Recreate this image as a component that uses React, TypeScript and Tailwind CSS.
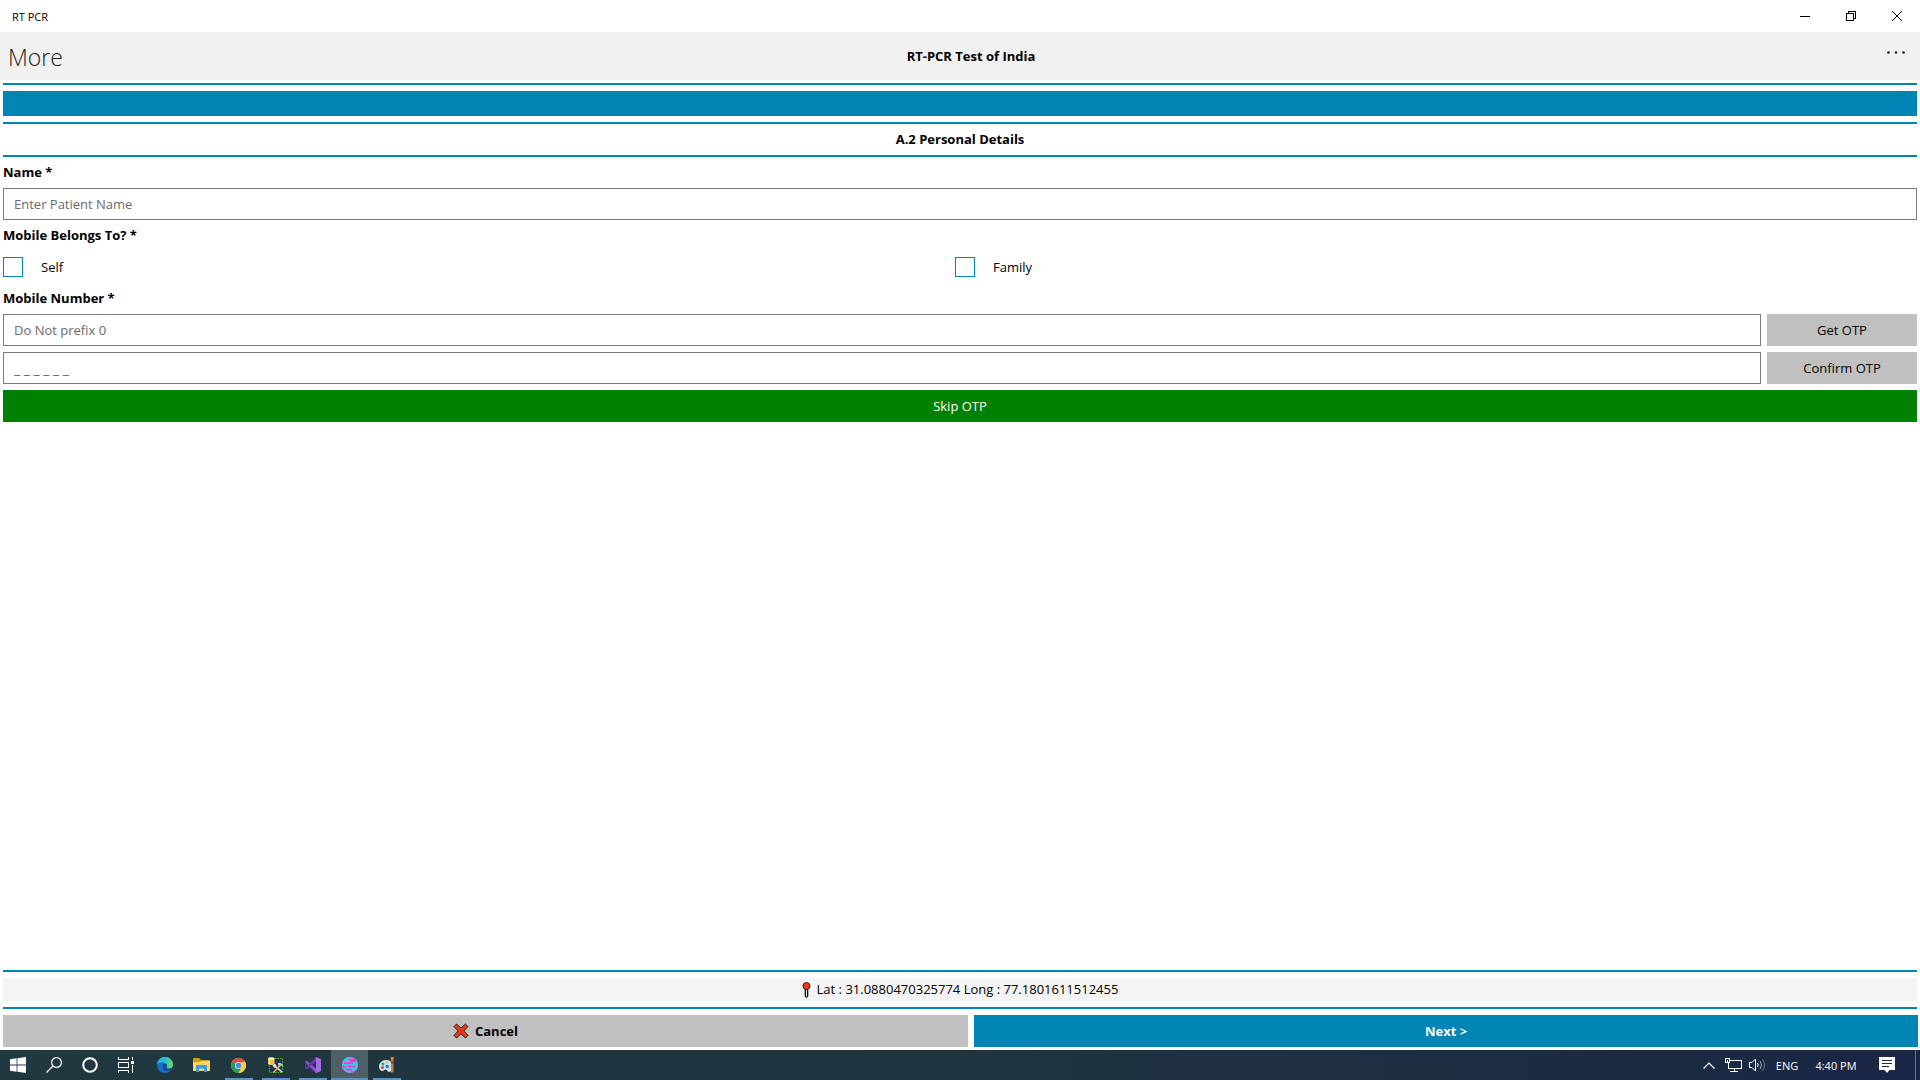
import { useState, type ReactNode } from "react";

const Rule = () => <div className="h-0.5 shrink-0 bg-[#0085b5]" />;

function Checkbox({ label }: { label: string }) {
  const [checked, setChecked] = useState(false);
  return (
    <label className="flex h-8 items-center gap-[18px]">
      <input
        type="checkbox"
        checked={checked}
        onChange={(e) => setChecked(e.target.checked)}
        className="size-5 appearance-none border border-[#0085b5] bg-white checked:bg-[#0085b5]"
      />
      {label}
    </label>
  );
}

const inputClass =
  "h-8 w-full min-w-0 flex-1 border border-[#7a7a7a] bg-white px-2.5 text-black outline-none placeholder:text-[#6b6b6b]";

function TitleBar() {
  return (
    <div className="flex h-8 items-center justify-between pl-3 text-[11px]">
      <span>RT PCR</span>
      <div className="flex h-full">
        <button aria-label="Minimize" className="flex w-[46px] items-center justify-center">
          <svg width="10" height="10" shapeRendering="crispEdges">
            <path d="M0 5.5h10" stroke="#000" />
          </svg>
        </button>
        <button aria-label="Restore" className="flex w-[46px] items-center justify-center">
          <svg width="10" height="10" fill="none" stroke="#000" shapeRendering="crispEdges">
            <path d="M.5 2.5h7v7h-7zM2.5 2.5v-2h7v7h-2" />
          </svg>
        </button>
        <button aria-label="Close" className="flex w-[46px] items-center justify-center">
          <svg width="10" height="10" stroke="#000">
            <path d="M0 0l10 10M10 0L0 10" />
          </svg>
        </button>
      </div>
    </div>
  );
}

function Header() {
  return (
    <header className="flex h-12 items-center bg-[#f1f1f1]">
      <h1 className="w-[70px] pt-0.5 pl-2 text-[23px] font-light text-[#222]">More</h1>
      <h2 className="flex-1 text-center font-bold">RT-PCR Test of India</h2>
      <button aria-label="More options" className="flex h-full w-12 justify-center pt-[19px]">
        <svg width="18" height="3" fill="#222">
          <circle cx="1.5" cy="1.5" r="1.3" />
          <circle cx="9" cy="1.5" r="1.3" />
          <circle cx="16.5" cy="1.5" r="1.3" />
        </svg>
      </button>
    </header>
  );
}

function Pin() {
  return (
    <svg width="9" height="16" viewBox="0 0 9 16">
      <path d="M2.7 7h3.6v7.4L4.5 16l-1.8-1.6z" fill="#111" />
      <path d="M4 8h1v6.5H4z" fill="#ddd" />
      <circle cx="4.5" cy="4" r="3.5" fill="#f03a17" stroke="#222" />
    </svg>
  );
}

function CrossMark() {
  return (
    <svg width="16" height="16" viewBox="0 0 16 16">
      <path
        d="M3.6 1 8 5.2 12.4 1 15 3.6 10.8 8l4.2 4.4-2.6 2.6L8 10.8 3.6 15 1 12.4 5.2 8 1 3.6z"
        fill="#f03a17"
        stroke="#222"
        strokeLinejoin="round"
      />
    </svg>
  );
}

const icons = {
  start: (
    <svg width="16" height="16" viewBox="0 0 16 16" fill="#fff">
      <path d="M0 2.2 6.6 1.3v6.3H0zM7.4 1.2 16 0v7.6H7.4zM0 8.4h6.6v6.3L0 13.8zM7.4 8.4H16V16l-8.6-1.2z" />
    </svg>
  ),
  search: (
    <svg width="16" height="16" viewBox="0 0 16 16" fill="none" stroke="#fff" strokeWidth="1.2">
      <circle cx="10.5" cy="5.5" r="4.9" />
      <path d="M7 9 .5 15.5" />
    </svg>
  ),
  cortana: (
    <svg width="16" height="16" viewBox="0 0 16 16" fill="none" stroke="#fff" strokeWidth="2">
      <circle cx="8" cy="8" r="6.8" />
    </svg>
  ),
  taskView: (
    <svg width="16" height="16" viewBox="0 0 16 16" fill="none" stroke="#fff" shapeRendering="crispEdges">
      <path d="M.5 0v2.5h10V0M.5 5.5h10v5H.5zM.5 16v-2.5h10V16M14.5 0v3M14.5 8v8" />
      <path d="M13 4h3v3h-3z" fill="#fff" stroke="none" />
    </svg>
  ),
  edge: (
    <svg width="16" height="16" viewBox="0 0 16 16">
      <defs>
        <linearGradient id="edgeTop" x1="0" x2="1" y1=".3" y2=".5">
          <stop offset="0" stopColor="#2aa5e4" />
          <stop offset=".6" stopColor="#35c1c4" />
          <stop offset="1" stopColor="#6bd95b" />
        </linearGradient>
      </defs>
      <circle cx="8" cy="8" r="8" fill="#1273cf" />
      <path d="M0 8a8 8 0 0 1 16-.5c0 3-2.4 4.2-4.5 4.2-1.8 0-2.700-.7-2-1.600C11 7.800 8.500 5.600 5.500 5.600 2.500 5.600.4 7 0 8z" fill="url(#edgeTop)" />
      <path d="M5.5 9.500C5.500 7.800 6.600 6.800 8 6.600c2 .2 2.300 2 1.500 3.500-.5 1 .5 1.600 2 1.600 1.600 0 2.700-.4 3.500-.8-1.300 2.600-3.500 3.600-5.500 3.100-2.300-.5-4-2.200-4-4.500z" fill="#1b4a94" />
      <path d="M9.2 10.500c-.4.9.7 1.500 2.300 1.500 1.700 0 2.900-.6 3.700-1.200l-.3.800c-1.700 1-5.400.9-6.700-.4z" fill="#203840" />
    </svg>
  ),
  explorer: (
    <svg width="17" height="14" viewBox="0 0 17 14">
      <path d="M0 1Q0 0 1 0h5l2 2h8q1 0 1 1v4H0z" fill="#d99a1c" />
      <path d="M0 4h7l1.5-1H17v10H0z" fill="#ffd465" />
      <path d="M3 14V8.500Q3 7 4.500 7h8Q14 7 14 8.500V14h-3v-3.500H6V14z" fill="#3a9be0" />
    </svg>
  ),
  chrome: (
    <svg width="15" height="15" viewBox="0 0 16 16">
      <circle cx="8" cy="8" r="8" fill="#ffcd40" />
      <path d="M8 8 1.100 4A8 8 0 0 1 14.900 4z" fill="#df4a3c" />
      <path d="M1.100 4A8 8 0 0 0 8 16l3.500-6L8 8z" fill="#219c58" />
      <path d="M14.900 4A8 8 0 0 1 8 16l4-7-1-5z" fill="#ffcd40" />
      <circle cx="8" cy="8" r="3.8" fill="#f3f3f3" />
      <circle cx="8" cy="8" r="3" fill="#4a8af4" />
    </svg>
  ),
  database: (
    <svg width="16" height="16" viewBox="0 0 16 16">
      <path d="M1.5 6v9.500h13V1.500H7" fill="none" stroke="#45b52b" strokeDasharray="1.5 1" />
      <path d="M0 1.500v5.500c0 1.400 6.500 1.400 6.500 0V1.500z" fill="#edc14a" />
      <ellipse cx="3.25" cy="1.5" rx="3.25" ry="1.3" fill="#fff1bd" />
      <path d="M1.300 3v4" stroke="#fff4c5" />
      <path d="m5.500 8 8.500 7" stroke="#c7cdd2" strokeWidth="1.7" />
      <path d="m12.500 8-7 7.500" stroke="#e8b35a" strokeWidth="1.5" />
      <path d="M9.500 6.500c2-1.500 5-.5 6 3l-2-1-2 1.500z" fill="#b7c4d0" />
      <path d="m4.500 8.500 2.500-2 1.500 2.500-2 2z" fill="#e3e8ec" />
    </svg>
  ),
  visualStudio: (
    <svg width="16" height="16" viewBox="0 0 16 16">
      <path d="M0 4.2 1.800 3.400 12 12.200V16l-1 0L0 5.500z" fill="#8b4fd0" />
      <path d="M0 11.800 11 0h1v3.800L1.800 12.600z" fill="#6f38ad" />
      <path d="M0 4.200 1.600 5.200v5.600L0 11.800z" fill="#6330a0" />
      <path d="m11 0 5 2v12l-5 2z" fill="#a66be6" />
    </svg>
  ),
  globe: (
    <svg width="16" height="16" viewBox="0 0 16 16">
      <defs>
        <clipPath id="globe">
          <circle cx="8" cy="8" r="8" />
        </clipPath>
      </defs>
      <g clipPath="url(#globe)" strokeWidth="1.5">
        <path d="M0 0h16v16H0z" fill="#b58af0" />
        <path d="M3 1h4M0 4h7M10 5h6M0 7.500h7M10 8h6M0 11h6M8 12h7M3 14.500h6" stroke="#16d8e8" strokeWidth="2" />
        <path d="M6 2.500h7M8 4h6M2 6h9M6 9.500h7M1 9.500h3M4 12.800h6M9 15h4" stroke="#fb2fd0" />
      </g>
    </svg>
  ),
  paint: (
    <svg width="16" height="16" viewBox="0 0 16 16">
      <path d="M7 3C3 3 0 6 0 9.500 0 12 1.500 14 3.500 14c1.500 0 1.500-1.500 3-1.500 2 0 2 2.500 3.500 2.500 2.500 0 4-3 4-6 0-3.500-3-6-7-6z" fill="#cde6f5" />
      <circle cx="4" cy="7" r="1.5" fill="#31a354" />
      <circle cx="7.5" cy="5.5" r="1.3" fill="#f4b72d" />
      <circle cx="3.5" cy="10.5" r="1.5" fill="#e24432" />
      <circle cx="8.2" cy="9.5" r="1.8" fill="#2382cc" />
      <path d="M11.500 0H15l-.8 5h-2zM12 6h2.500v9.500H12z" fill="#e07c28" />
      <path d="M11.800 4.500h2.800v2h-2.800z" fill="#6e5237" />
    </svg>
  ),
};

interface TaskbarItem {
  name: string;
  icon: ReactNode;
  running?: boolean;
  active?: boolean;
}

const systemButtons: TaskbarItem[] = [
  { name: "Start", icon: icons.start },
  { name: "Search", icon: icons.search },
  { name: "Cortana", icon: icons.cortana },
  { name: "Task View", icon: icons.taskView },
];

const apps: TaskbarItem[] = [
  { name: "Microsoft Edge", icon: icons.edge },
  { name: "File Explorer", icon: icons.explorer },
  { name: "Google Chrome", icon: icons.chrome, running: true },
  { name: "Database Tools", icon: icons.database, running: true },
  { name: "Visual Studio", icon: icons.visualStudio, running: true },
  { name: "RT PCR", icon: icons.globe, running: true, active: true },
  { name: "Paint", icon: icons.paint, running: true },
];

function Taskbar() {
  return (
    <footer className="flex h-[30px] items-stretch bg-linear-to-r from-[#203840] via-[#20343f] to-[#1a2645] text-[11px] text-white">
      {systemButtons.map((b) => (
        <button key={b.name} aria-label={b.name} className="flex w-9 items-center justify-center">
          {b.icon}
        </button>
      ))}
      <div className="ml-0.5 flex">
        {apps.map((a) => (
          <button key={a.name} aria-label={a.name} className={`flex w-[37px] flex-col items-center ${a.active ? "bg-[#4d6068]" : ""}`}>
            <span className="flex flex-1 items-center pt-0.5">{a.icon}</span>
            <span className={`h-0.5 ${a.active ? "w-full" : "w-7"} ${a.running ? "bg-[#5b93c5]" : ""}`} />
          </button>
        ))}
      </div>
      <div className="ml-auto flex items-center">
        <button aria-label="Show hidden icons" className="flex w-6 justify-center">
          <svg width="12" height="7" fill="none" stroke="#fff" strokeWidth="1.2">
            <path d="M.5 6.500 6 1l5.500 5.500" />
          </svg>
        </button>
        <button aria-label="Network" className="flex w-6 justify-center">
          <svg width="17" height="14" fill="none" stroke="#fff" shapeRendering="crispEdges">
            <path d="M4 2.500h12.500v8H3.500V5M9.500 11v2.500M5 13.500h8M.5.500h4v4h-4zM2.500 2v3" />
          </svg>
        </button>
        <button aria-label="Volume" className="flex w-6 justify-center">
          <svg width="17" height="14" viewBox="0 0 17 14" fill="none" stroke="#fff">
            <path d="M.5 4.500h2.500l3.500-3.500v12L3 9.500H.5z" />
            <path d="M8.500 5q1.500 2 0 4" />
            <path d="M11 3q3 4 0 8" opacity=".6" />
            <path d="M13.500 1.200q4 5.800 0 11.600" opacity=".35" />
          </svg>
        </button>
        <button className="w-9 text-center">ENG</button>
        <button className="w-[62px] text-center whitespace-nowrap">4:40 PM</button>
        <button aria-label="Notifications" className="flex w-10 justify-center">
          <svg width="16" height="16" viewBox="0 0 16 16">
            <path d="M0 0h16v13h-5.500L8 16l-2.500-3H0z" fill="#fff" />
            <path d="M3 3.500h10M3 6.500h10M3 9.500h7" stroke="#1b2945" />
          </svg>
        </button>
        <button aria-label="Show desktop" className="ml-2 h-[30px] w-[5px] border-l border-[#69748a]" />
      </div>
    </footer>
  );
}

function App() {
  return (
    <div className="flex min-h-screen flex-col bg-white font-['Open_Sans','Noto_Sans',sans-serif] text-[13px] leading-[19px] text-black">
      <TitleBar />
      <Header />
      <main className="flex flex-1 flex-col gap-1.5 p-[3px]">
        <Rule />
        <div className="h-[25px] bg-[#0085b5]" />
        <Rule />
        <h3 className="text-center font-bold">A.2 Personal Details</h3>
        <Rule />
        <label htmlFor="name" className="font-bold">Name *</label>
        <div className="flex">
          <input id="name" className={inputClass} placeholder="Enter Patient Name" />
        </div>
        <p id="belongs" className="font-bold">Mobile Belongs To? *</p>
        <div role="group" aria-labelledby="belongs" className="grid grid-cols-[946fr_962fr] gap-1.5">
          <Checkbox label="Self" />
          <Checkbox label="Family" />
        </div>
        <label htmlFor="mobile" className="font-bold">Mobile Number *</label>
        <div className="flex gap-1.5">
          <input id="mobile" type="tel" className={inputClass} placeholder="Do Not prefix 0" />
          <button className="w-[150px] bg-[#c0c0c0]">Get OTP</button>
        </div>
        <div className="flex gap-1.5 text-sm">
          <input aria-label="OTP" className={inputClass} placeholder="_ _ _ _ _ _" />
          <button className="w-[150px] bg-[#c0c0c0] text-[13px]">Confirm OTP</button>
        </div>
        <button className="h-8 bg-[#008000] text-white">Skip OTP</button>
        <div className="mt-auto flex flex-col gap-1.5">
          <Rule />
          <p className="flex h-[23px] items-center justify-center gap-1.5 bg-[#f4f4f4]">
            <Pin />
            Lat : 31.0880470325774 Long : 77.1801611512455
          </p>
          <Rule />
          <div className="-mr-px grid h-8 grid-cols-[965fr_944fr] gap-1.5 font-bold">
            <button className="flex items-center justify-center gap-1.5 bg-[#c0c0c0]">
              <CrossMark />
              Cancel
            </button>
            <button className="bg-[#0085b5] text-white">Next &gt;</button>
          </div>
        </div>
      </main>
      <Taskbar />
    </div>
  );
}

export default App;
